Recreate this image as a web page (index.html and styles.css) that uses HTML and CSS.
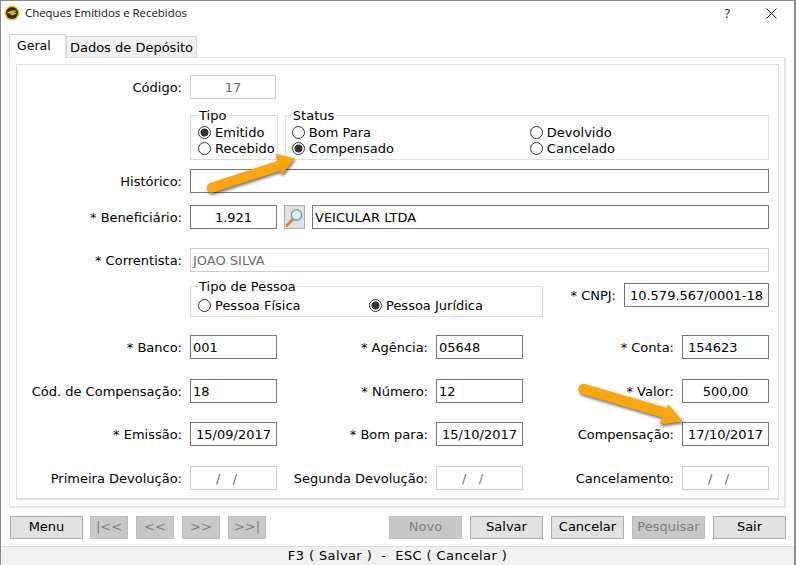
FILE: index.html
```html
<!DOCTYPE html>
<html lang="pt-BR">
<head>
  <meta charset="UTF-8">
  <meta name="viewport" content="width=device-width, initial-scale=1.0">
  <title>Cheques Emitidos e Recebidos</title>
  <link rel="stylesheet" href="styles.css">
</head>
<body>
<div class="window">

  <div class="titlebar">
    <svg class="app-icon" width="16" height="16" viewBox="0 0 16 16">
      <circle cx="8" cy="8" r="7.5" fill="#f2c81e"/>
      <circle cx="8" cy="8" r="6" fill="#2b2b22"/>
      <path d="M2.5 8 L7 5.5 L13 5.5 L10.5 7.5 L13 8.5 L8 10.5 L5.5 8.5 Z" fill="#d9b01c"/>
    </svg>
    <span class="title">Cheques Emitidos e Recebidos</span>
    <span class="help">?</span>
    <svg class="close" width="11" height="11" viewBox="0 0 11 11">
      <path d="M0.5 0.5 L10.5 10.5 M10.5 0.5 L0.5 10.5" stroke="#222" stroke-width="1" fill="none"/>
    </svg>
  </div>

  <div class="tabs">
    <div class="tab active">Geral</div>
    <div class="tab">Dados de Depósito</div>
  </div>

  <div class="tab-panel">
    <div class="form">

      <div class="row row-codigo">
        <label class="lbl">Código:</label>
        <div class="inp disabled center">17</div>
      </div>

      <div class="row row-groups">
        <div class="group group-tipo">
          <div class="legend">Tipo</div>
          <div class="radio on">Emitido</div>
          <div class="radio">Recebido</div>
        </div>
        <div class="group group-status">
          <div class="legend">Status</div>
          <div class="status-grid">
            <div class="radio">Bom Para</div>
            <div class="radio">Devolvido</div>
            <div class="radio on">Compensado</div>
            <div class="radio">Cancelado</div>
          </div>
        </div>
      </div>

      <div class="row row-historico">
        <label class="lbl">Histórico:</label>
        <div class="inp grow"></div>
      </div>

      <div class="row row-benef">
        <label class="lbl">* Beneficiário:</label>
        <div class="inp center">1.921</div>
        <div class="lookup">
          <svg width="21" height="21" viewBox="0 0 21 21">
            <path d="M3 18.5 L9 12" stroke="#e08a2c" stroke-width="3" stroke-linecap="round"/>
            <circle cx="12.5" cy="8" r="5.2" fill="#d8eefb" stroke="#6f9fc4" stroke-width="1.4"/>
            <path d="M9.5 8 A3 3 0 0 1 12.5 5" stroke="#fff" stroke-width="1.4" fill="none"/>
          </svg>
        </div>
        <div class="inp grow">VEICULAR LTDA</div>
      </div>

      <div class="row row-corr">
        <label class="lbl">* Correntista:</label>
        <div class="inp grow disabled">JOAO SILVA</div>
      </div>

      <div class="row row-pessoa">
        <div class="group group-pessoa">
          <div class="legend">Tipo de Pessoa</div>
          <div class="pessoa-grid">
            <div class="radio">Pessoa Física</div>
            <div class="radio on">Pessoa Jurídica</div>
          </div>
        </div>
        <label class="lbl lbl-cnpj">* CNPJ:</label>
        <div class="inp inp-cnpj center">10.579.567/0001-18</div>
      </div>

      <div class="grid3 row-banco">
        <label class="lbl">* Banco:</label>
        <div class="inp">001</div>
        <label class="lbl">* Agência:</label>
        <div class="inp">05648</div>
        <label class="lbl">* Conta:</label>
        <div class="inp inp-conta">154623</div>
      </div>

      <div class="grid3 row-numero">
        <label class="lbl">Cód. de Compensação:</label>
        <div class="inp">18</div>
        <label class="lbl">* Número:</label>
        <div class="inp">12</div>
        <label class="lbl">* Valor:</label>
        <div class="inp center">500,00</div>
      </div>

      <div class="grid3 row-datas">
        <label class="lbl">* Emissão:</label>
        <div class="inp center">15/09/2017</div>
        <label class="lbl">* Bom para:</label>
        <div class="inp center">15/10/2017</div>
        <label class="lbl">Compensação:</label>
        <div class="inp center">17/10/2017</div>
      </div>

      <div class="grid3 row-devol">
        <label class="lbl">Primeira Devolução:</label>
        <div class="inp disabled center blank">/&nbsp;&nbsp;&nbsp;/</div>
        <label class="lbl">Segunda Devolução:</label>
        <div class="inp disabled center blank">/&nbsp;&nbsp;&nbsp;/</div>
        <label class="lbl">Cancelamento:</label>
        <div class="inp disabled center blank">/&nbsp;&nbsp;&nbsp;/</div>
      </div>

    </div>
  </div>

  <div class="buttons">
    <div class="btn wide">Menu</div>
    <div class="nav">
      <div class="btn off">|&lt;&lt;</div>
      <div class="btn off">&lt;&lt;</div>
      <div class="btn off">&gt;&gt;</div>
      <div class="btn off">&gt;&gt;|</div>
    </div>
    <div class="actions">
      <div class="btn wide off">Novo</div>
      <div class="btn wide">Salvar</div>
      <div class="btn wide">Cancelar</div>
      <div class="btn wide off">Pesquisar</div>
      <div class="btn wide">Sair</div>
    </div>
  </div>

  <div class="statusbar">F3 ( Salvar )&nbsp; - &nbsp;ESC ( Cancelar )</div>

  <svg class="arrows" width="796" height="565" viewBox="0 0 796 565">
    <path d="M210 183 L280 160 L283 170 L213 192.5 A5 5 0 0 1 210 183 Z" fill="#f8a512"/>
    <path d="M276 154.5 L294 158.5 L282 174 Z" fill="#f8a512" stroke="#f8a512" stroke-width="1" stroke-linejoin="round"/>
    <path d="M585 384 L671 409 L667 419 L582 394 A5 5 0 0 1 585 384 Z" fill="#f8a512"/>
    <path d="M668 405 L682 421 L660 424 Z" fill="#f8a512" stroke="#f8a512" stroke-width="1" stroke-linejoin="round"/>
  </svg>
</div>
</body>
</html>
```

FILE: styles.css
```css
html, body {
  margin: 0;
  padding: 0;
  overflow: hidden;
}
body {
  background-color: #fff;
  color: #000;
  font-family: "DejaVu Sans", Verdana, sans-serif;
  font-size: 13px;
}
.window {
  position: relative;
  width: 796px;
  height: 565px;
  box-sizing: border-box;
  border: 1px solid #8c8c8c;
  border-width: 1px 2px 2px 1px;
  background-color: #fff;
  display: flex;
  flex-direction: column;
}

/* title bar */
.titlebar {
  height: 29px;
  display: flex;
  align-items: center;
  padding-bottom: 5px;
  box-sizing: border-box;
  flex: none;
}
.app-icon {
  margin-left: 3px;
  margin-right: 5px;
}
.title {
  font-family: "Open Sans", "Noto Sans", sans-serif;
  font-size: 11.4px;
  color: #111;
  margin-top: -1px;
}
.help {
  margin-left: auto;
  font-family: "Open Sans", sans-serif;
  font-size: 13px;
  color: #222;
  margin-top: -1px;
}
.close {
  margin-left: 36px;
  margin-right: 17px;
}

/* tabs */
.tabs {
  display: flex;
  align-items: flex-end;
  height: 27px;
  padding-left: 8px;
  flex: none;
}
.tab {
  box-sizing: border-box;
  height: 21px;
  width: 131px;
  border: 1px solid #d9d9d9;
  border-bottom: none;
  background-color: #f0f0f0;
  text-align: center;
  line-height: 21px;
}
.tab.active {
  height: 24px;
  width: 57px;
  background-color: #fff;
  margin-bottom: -1px;
  position: relative;
  line-height: 22px;
  font-size: 12.5px;
  text-align: left;
  padding-left: 7px;
}
.tab-panel {
  margin-left: 8px;
  width: 777px;
  height: 451px;
  box-sizing: border-box;
  border: 2px solid #e3e3e3;
  border-width: 1px 2px 2px 1px;
  padding: 6px 5px 6px 6px;
  flex: none;
}
.form {
  box-sizing: border-box;
  height: 100%;
  border: 2px solid #dcdcdc;
  border-width: 1px 1px 2px 1px;
  padding-top: 10px;
  padding-right: 9px;
}

/* rows */
.row {
  display: flex;
  align-items: flex-start;
}
.lbl {
  box-sizing: border-box;
  width: 173px;
  padding-right: 8px;
  text-align: right;
  line-height: 26px;
  height: 24px;
  white-space: nowrap;
  flex: none;
}
.grid3 {
  display: grid;
  grid-template-columns: 173px 87px 159px 87px 159px 87px;
}
.grid3 .lbl {
  width: auto;
}
.inp {
  box-sizing: border-box;
  width: 87px;
  height: 24px;
  border: 1px solid #777;
  line-height: 24px;
  padding: 0 4px 0 2px;
  white-space: nowrap;
  flex: none;
}
.inp.grow {
  width: 579px;
  flex: 1;
}
.inp.center {
  text-align: center;
  padding: 0;
}
.inp.disabled {
  border-color: #cfcfcf;
  color: #6d6d6d;
}
.inp.blank {
  padding-right: 14px;
}
.inp-conta {
  padding-left: 5px;
}
.row-groups { margin-top: 16px; }
.row-historico { margin-top: 9px; }
.row-benef { margin-top: 12px; }
.row-corr { margin-top: 19px; }
.row-pessoa { margin-top: 11px; }
.row-banco { margin-top: 18px; }
.row-numero { margin-top: 20px; }
.row-datas { margin-top: 19px; }
.row-devol { margin-top: 20px; }

.row-codigo .inp { width: 86px; }

/* groups */
.group {
  box-sizing: border-box;
  border: 1px solid #dedede;
  padding-left: 7px;
}
.legend {
  width: fit-content;
  background-color: #fff;
  line-height: 14px;
  margin: -7px 0 1px 0;
  padding: 0 1px;
}
.row-groups .group {
  height: 45px;
}
.group-tipo {
  width: 88px;
  margin-left: 173px;
}
.group-status {
  width: 485px;
  margin-left: 7px;
  padding-left: 6px;
}
.status-grid {
  display: grid;
  grid-template-columns: 238px 1fr;
}
.radio {
  display: flex;
  align-items: center;
  gap: 4px;
  height: 16px;
  white-space: nowrap;
}
.radio::before {
  content: "";
  box-sizing: border-box;
  width: 13px;
  height: 13px;
  border: 1px solid #333;
  border-radius: 50%;
  background-color: #fff;
  flex: none;
}
.radio.on::before {
  background: radial-gradient(circle, #333 0, #333 3.6px, #fff 4.4px);
}
.group-pessoa {
  width: 354px;
  height: 31px;
  margin-left: 173px;
  margin-top: 3px;
}
.pessoa-grid {
  display: grid;
  grid-template-columns: 171px 1fr;
  padding-top: 2px;
}
.lbl-cnpj {
  width: 81px;
}
.inp-cnpj {
  width: 145px;
}

/* lookup button */
.lookup {
  box-sizing: border-box;
  width: 21px;
  height: 24px;
  margin: 0 7px;
  background-color: #e1e1e1;
  border: 1px solid #adadad;
  display: flex;
  align-items: center;
  justify-content: center;
  flex: none;
}
.lookup svg {
  margin: -1px;
}

/* button bar */
.buttons {
  display: flex;
  align-items: flex-start;
  margin-top: 8px;
  padding-left: 9px;
  height: 23px;
  flex: none;
}
.btn {
  box-sizing: border-box;
  width: 38px;
  height: 23px;
  line-height: 20px;
  text-align: center;
  background-color: #e1e1e1;
  border: 1px solid #adadad;
  white-space: nowrap;
}
.btn.wide {
  width: 73px;
}
.btn.off {
  background-color: #c8c8c8;
  border-color: #bcbcbc;
  color: #7d7d7d;
}
.nav {
  display: flex;
  gap: 8px;
  margin-left: 7px;
}
.actions {
  display: flex;
  gap: 8px;
  margin-left: auto;
  margin-right: 8px;
}

/* footer */
.statusbar {
  margin-top: 7px;
  flex: 1;
  background-color: #f0f0f0;
  border-top: 1px solid #dcdcdc;
  text-align: center;
  line-height: 18px;
  letter-spacing: 0.4px;
}

/* arrows drawn on top of the screen */
.arrows {
  position: absolute;
  left: -1px;
  top: -1px;
  pointer-events: none;
  filter: drop-shadow(1px 2px 1.5px rgba(0, 0, 0, 0.55));
}
```
